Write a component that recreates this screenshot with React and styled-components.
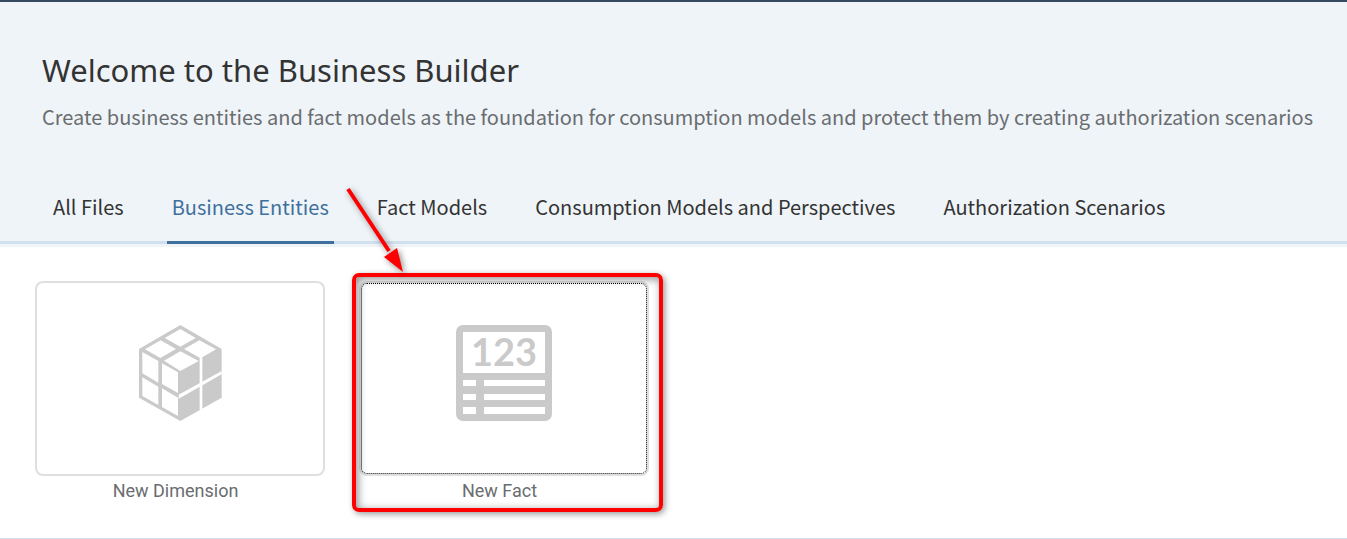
import React from "react";
import styled, { createGlobalStyle, css } from "styled-components";

const GlobalStyle = createGlobalStyle`
  * { box-sizing: border-box; }
  body {
    margin: 0;
    background: #fff;
    color: #333;
    font-family: "Noto Sans CJK SC", "Noto Sans", sans-serif;
    overflow-x: hidden;
  }
`;

const Page = styled.div`
  border-top: 2px solid #354a5f;
`;

const Header = styled.header`
  background: #eff4f8;
  padding: 46px 0 3px;
`;

const Title = styled.h1`
  margin: 0 42px;
  font-family: "Noto Sans", sans-serif;
  font-size: 31px;
  line-height: 44px;
  font-weight: 400;
  color: #333;
`;

const Subtitle = styled.p`
  margin: 11px 0 0 42px;
  font-size: 20px;
  line-height: 28px;
  color: #6a6d70;
  white-space: nowrap;
`;

const TabBar = styled.nav`
  display: flex;
  gap: 38px;
  margin-top: 46px;
  padding-left: 48px;
  box-shadow: inset 0 -3px #d1e0ee;
`;

const Tab = styled.a`
  padding: 16px 5px 20px;
  border-bottom: 3px solid transparent;
  font-size: 20px;
  line-height: 28px;
  color: #333;
  text-decoration: none;
  white-space: nowrap;
  ${(p) =>
    p.$active &&
    css`
      color: #3f709d;
      border-color: #3f709d;
    `}
`;

const Tiles = styled.main`
  display: flex;
  gap: 34px;
  padding: 34px 35px 35px;
  border-bottom: 1px solid #d1e0ee;
`;

const Tile = styled.div`
  position: relative;
  width: 290px;
  text-align: center;
`;

const TileButton = styled.button`
  display: flex;
  justify-content: center;
  width: 100%;
  height: 195px;
  padding: 42px 0 0;
  background: #fff;
  border: 2px solid #dfdfdf;
  border-radius: 8px;
  outline: ${(p) => (p.$focused ? "1px dotted #000" : "none")};
  outline-offset: -3px;
`;

const TileLabel = styled.label`
  display: block;
  margin-top: 3px;
  padding-right: 9px;
  font-family: Roboto, sans-serif;
  font-size: 18px;
  line-height: 24px;
  color: #6a6d70;
`;

const Highlight = styled.div`
  position: absolute;
  inset: -8px -14px -9px -7px;
  border: 4px solid #ff0000;
  border-radius: 7px;
  box-shadow: 2px 2px 6px rgba(0, 0, 0, 0.4), inset 2px 2px 8px rgba(0, 0, 0, 0.45);
  pointer-events: none;
`;

const Arrow = styled.svg`
  position: absolute;
  top: -95px;
  left: -16px;
  overflow: visible;
  filter: drop-shadow(2px 2px 3px rgba(0, 0, 0, 0.45));
  pointer-events: none;
`;

const CubeIcon = () => (
  <svg width="96" height="96" viewBox="36 44 288 288" aria-hidden="true">
    <path fill="#cacaca" d="M181 44 305 116V262L181 332 57 262V116Z" />
    <g fill="#fff">
      <path d="M181 56 227 83 181 109 134 83Z" />
      <path d="M122 90 168 116 121 143 75 117Z" />
      <path d="M238 90 288 117 247 141V151H239V142L192 116Z" />
      <path d="M181 123 236 152 181 182 132 151Z" />
      <path d="M67 125 115 152V217L67 189Z" />
      <path d="M126 159 174 186V248L126 221Z" />
      <path d="M67 201 115 229V284L67 257Z" />
      <path d="M126 234 174 262V317L126 290Z" />
      <path d="M239 150H247V296L239 300Z" />
      <path d="M176 253 305 182V192L176 265Z" />
    </g>
  </svg>
);

const FactIcon = () => (
  <svg width="96" height="96" viewBox="0 0 96 96" aria-hidden="true">
    <rect width="96" height="96" rx="7" fill="#cacaca" />
    <g fill="#fff">
      <path d="M7 7H89V48H7Z" />
      <path d="M7 55H20V61H7ZM28 55H89V61H28Z" />
      <path d="M7 69H20V75H7ZM28 69H89V75H28Z" />
      <path d="M7 82H20V89H7ZM28 82H89V89H28Z" />
    </g>
    <text x="48" y="41" textAnchor="middle" fill="#cacaca" fontFamily="Lato, sans-serif" fontWeight="700" fontSize="38">
      123
    </text>
  </svg>
);

const tabs = [
  "All Files",
  "Business Entities",
  "Fact Models",
  "Consumption Models and Perspectives",
  "Authorization Scenarios",
];

export default function App() {
  return (
    <Page>
      <GlobalStyle />
      <Header>
        <Title>Welcome to the Business Builder</Title>
        <Subtitle>
          Create business entities and fact models as the foundation for consumption models and protect them by
          creating authorization scenarios
        </Subtitle>
        <TabBar>
          {tabs.map((name) => (
            <Tab key={name} href="#" $active={name === "Business Entities"}>
              {name}
            </Tab>
          ))}
        </TabBar>
      </Header>
      <Tiles>
        <Tile>
          <TileButton id="new-dimension">
            <CubeIcon />
          </TileButton>
          <TileLabel htmlFor="new-dimension">New Dimension</TileLabel>
        </Tile>
        <Tile>
          <TileButton id="new-fact" $focused>
            <FactIcon />
          </TileButton>
          <TileLabel htmlFor="new-fact">New Fact</TileLabel>
          <Highlight />
          <Arrow width="64" height="90" viewBox="0 0 64 90" aria-hidden="true">
            <path d="M5 3 46 65" stroke="#ff0000" strokeWidth="4" />
            <path d="M41 71 54 62 60 86Z" fill="#ff0000" />
          </Arrow>
        </Tile>
      </Tiles>
    </Page>
  );
}
